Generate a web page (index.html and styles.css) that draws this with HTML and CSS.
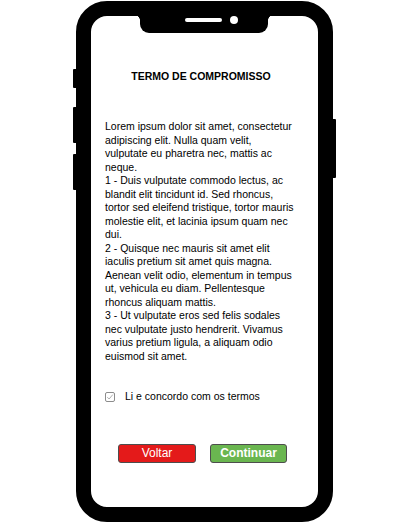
FILE: index.html
```html
<!DOCTYPE html>
<html lang="pt">
<head>
<meta charset="utf-8">
<title>Termo de compromisso</title>
<link rel="stylesheet" href="styles.css">
</head>
<body>
<div class="phone">
  <span class="side-btn side-btn--l1"></span>
  <span class="side-btn side-btn--l2"></span>
  <span class="side-btn side-btn--l3"></span>
  <span class="side-btn side-btn--r1"></span>
  <div class="notch">
    <span class="speaker"></span>
    <span class="camera"></span>
  </div>
  <div class="screen">
    <h1 class="title">TERMO DE COMPROMISSO</h1>
    <p class="terms">Lorem ipsum dolor sit amet, consectetur adipiscing elit. Nulla quam velit, vulputate eu pharetra nec, mattis ac neque.<br>1 - Duis vulputate commodo lectus, ac blandit elit tincidunt id. Sed rhoncus, tortor sed eleifend tristique, tortor mauris molestie elit, et lacinia ipsum quam nec dui.<br>2 - Quisque nec mauris sit amet elit iaculis pretium sit amet quis magna. Aenean velit odio, elementum in tempus ut, vehicula eu diam. Pellentesque rhoncus aliquam mattis.<br>3 - Ut vulputate eros sed felis sodales nec vulputate justo hendrerit. Vivamus varius pretium ligula, a aliquam odio euismod sit amet.</p>
    <label class="agree">
      <span class="checkbox">
        <svg viewBox="0 0 8 8" width="8" height="8"><path d="M1.3 4.2 L3.1 6 L6.8 1.6" fill="none" stroke="#9a9a9a" stroke-width="0.8"/></svg>
      </span>
      <span class="agree-text">Li e concordo com os termos</span>
    </label>
    <div class="actions">
      <button class="btn btn--back">Voltar</button>
      <button class="btn btn--next">Continuar</button>
    </div>
  </div>
</div>
</body>
</html>
```
FILE: styles.css
```css
* { box-sizing: border-box; }
html, body { margin: 0; padding: 0; background: #fff; }
body {
  font-family: "Liberation Sans", Arial, sans-serif;
  color: #000;
}
.phone {
  position: relative;
  width: 257px;
  height: 521px;
  margin: 1px 0 0 76px;
  border: 15px solid #000;
  border-radius: 31px;
  background: #fff;
}
.side-btn {
  position: absolute;
  width: 4px;
  background: #000;
  border-radius: 1px;
}
.side-btn--l1 { left: -18px; top: 53px; height: 19px; }
.side-btn--l2 { left: -18px; top: 91px; height: 36px; }
.side-btn--l3 { left: -18px; top: 138px; height: 36px; }
.side-btn--r1 { right: -18px; top: 103px; height: 59px; }
.notch {
  position: absolute;
  left: 49px;
  top: -1px;
  width: 128px;
  height: 18px;
  background: #000;
  border-radius: 0 0 9px 9px;
}
.notch::before,
.notch::after {
  content: "";
  position: absolute;
  top: 0;
  width: 5px;
  height: 5px;
}
.notch::before {
  left: -5px;
  background: radial-gradient(circle at 0 100%, transparent 4.5px, #000 5px);
}
.notch::after {
  right: -5px;
  background: radial-gradient(circle at 100% 100%, transparent 4.5px, #000 5px);
}
.speaker {
  position: absolute;
  left: 45px;
  top: 3px;
  width: 37px;
  height: 4px;
  border-radius: 2px;
  background: #fff;
}
.camera {
  position: absolute;
  left: 90px;
  top: 1px;
  width: 8px;
  height: 8px;
  border-radius: 50%;
  background: #fff;
}
.screen {
  padding: 54px 21px 0 14px;
  display: flex;
  flex-direction: column;
}
.title {
  margin: 0;
  font-size: 10.5px;
  line-height: 13.5px;
  font-weight: bold;
  text-align: center;
}
.terms {
  margin: 36.5px 0 0;
  width: 191px;
  font-size: 10.5px;
  line-height: 13.5px;
}
.agree {
  margin-top: 27px;
  display: flex;
  align-items: center;
  font-size: 10.5px;
  line-height: 13.5px;
}
.checkbox {
  flex-shrink: 0;
  width: 10px;
  height: 10px;
  margin: 0 10px 0 0;
  border: 1px solid #8c8c8c;
  border-radius: 2px;
  display: flex;
  align-items: center;
  justify-content: center;
  background: #fff;
}
.checkbox svg { display: block; }
.actions {
  margin: 40.5px 0 0 13px;
  display: flex;
  gap: 14px;
}
.btn {
  height: 19px;
  padding: 0;
  border: 1px solid #4d4d4d;
  border-radius: 3px;
  color: #fff;
  font-family: "Liberation Sans", Arial, sans-serif;
  font-size: 12px;
  line-height: 17px;
}
.btn--back {
  width: 78px;
  background: #e41a1a;
}
.btn--next {
  width: 77px;
  background: #6ab650;
  font-weight: bold;
}
```
